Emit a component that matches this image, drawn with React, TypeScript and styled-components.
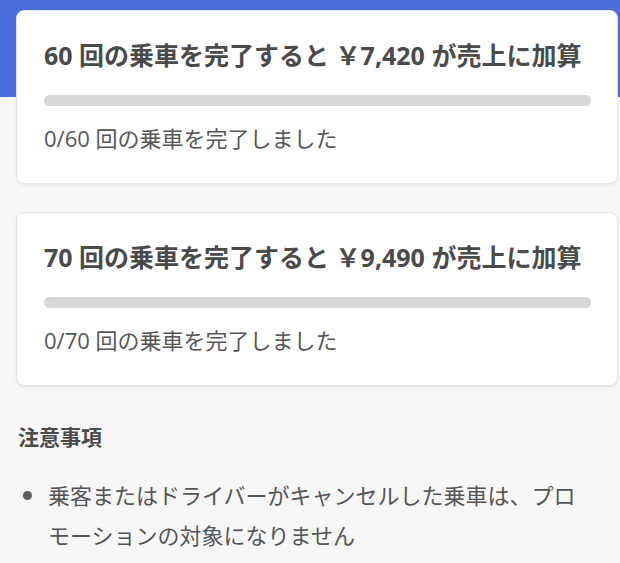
import React from "react";
import styled, { createGlobalStyle } from "styled-components";

const GlobalStyle = createGlobalStyle`
  html, body {
    margin: 0;
    padding: 0;
    background: #f7f7f7;
  }
  body {
    font-family: "Open Sans", "Noto Sans CJK JP", sans-serif;
    color: #4d4d4d;
    -webkit-font-smoothing: antialiased;
  }
`;

const Page = styled.div`
  position: relative;
  width: 620px;
  min-height: 563px;
  overflow: hidden;
  background: #f7f7f7;
`;

const HeaderBand = styled.div`
  height: 97px;
  background: #4b6edb;
`;

const Content = styled.div`
  margin-top: -87px;
  padding: 0 2px 0 16px;
  display: flex;
  flex-direction: column;
  gap: 28px;
`;

const Card = styled.section`
  background: #ffffff;
  border: 1px solid #e4e4e4;
  border-radius: 8px;
  box-shadow: 0 1px 3px rgba(0, 0, 0, 0.06);
  padding: 24px 26px 30px 27px;
  height: 174px;
  box-sizing: border-box;
`;

const CardTitle = styled.h2`
  margin: 0;
  font-size: 25px;
  font-weight: 700;
  line-height: 40px;
  color: #4a4a4a;
  white-space: nowrap;
`;

const Track = styled.div`
  margin-top: 20px;
  height: 11px;
  border-radius: 6px;
  background: #d7d7d7;
  overflow: hidden;
`;

const Fill = styled.div`
  height: 100%;
  background: #4b6edb;
`;

const Progress = styled.p`
  margin: 16px 0 0;
  font-size: 22px;
  font-weight: 400;
  line-height: 32px;
  color: #565656;
`;

const Notes = styled.div`
  padding: 35px 40px 0 18px;
`;

const NotesHeading = styled.h3`
  margin: 0;
  font-size: 21px;
  font-weight: 700;
  line-height: 32px;
  color: #4a4a4a;
`;

const NoteList = styled.ul`
  margin: 22px 0 0;
  padding: 0;
  list-style: none;
`;

const NoteItem = styled.li`
  position: relative;
  padding-left: 30px;
  font-size: 22px;
  line-height: 40px;
  color: #555555;
`;

const Dot = styled.span`
  position: absolute;
  left: 5px;
  top: 16px;
  width: 9px;
  height: 9px;
  border-radius: 50%;
  background: #5e5e5e;
`;

type Goal = { rides: number; reward: string; done: number };

const goals: Goal[] = [
  { rides: 60, reward: "7,420", done: 0 },
  { rides: 70, reward: "9,490", done: 0 },
];

export default function App() {
  return (
    <>
      <GlobalStyle />
      <Page>
        <HeaderBand />
        <Content>
          {goals.map((g) => (
            <Card key={g.rides}>
              <CardTitle>
                {g.rides} 回の乗車を完了すると ￥{g.reward} が売上に加算
              </CardTitle>
              <Track>
                <Fill style={{ width: `${(g.done / g.rides) * 100}%` }} />
              </Track>
              <Progress>
                {g.done}/{g.rides} 回の乗車を完了しました
              </Progress>
            </Card>
          ))}
        </Content>
        <Notes>
          <NotesHeading>注意事項</NotesHeading>
          <NoteList>
            <NoteItem>
              <Dot />
              乗客またはドライバーがキャンセルした乗車は、プロモーションの対象になりません
            </NoteItem>
          </NoteList>
        </Notes>
      </Page>
    </>
  );
}
